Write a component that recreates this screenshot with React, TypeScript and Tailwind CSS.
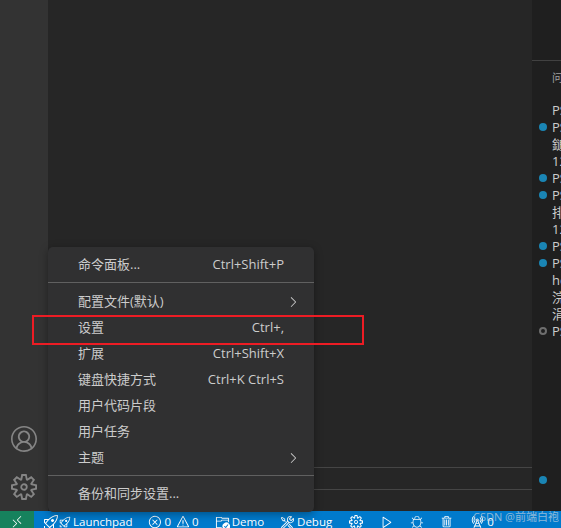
import { VscAccount, VscSettingsGear, VscRemote, VscRocket, VscError, VscWarning, VscFolderActive, VscTools, VscPlay, VscBug, VscTrash, VscRadioTower, VscChevronRight } from "react-icons/vsc";

function Item({ label, keys, sub }: { label: string; keys?: string; sub?: boolean }) {
  return (
    <div className="relative flex h-[26px] items-center justify-between px-[30px]">
      <span>{label}</span>
      {keys && <span>{keys}</span>}
      {sub && <VscChevronRight className="absolute right-[13px] top-[5px] text-[16px]" />}
    </div>
  );
}

const rows: { t: string; mark?: "dot" | "ring" }[] = [
  { t: "PS C:\\Users" },
  { t: "PS C:\\Users", mark: "dot" },
  { t: "鎚 npm run" },
  { t: "123 packages" },
  { t: "PS C:\\Users", mark: "dot" },
  { t: "PS C:\\Users", mark: "dot" },
  { t: "排 npm run" },
  { t: "123 packages" },
  { t: "PS C:\\Users", mark: "dot" },
  { t: "PS C:\\Users", mark: "dot" },
  { t: "hello world" },
  { t: "浣犲ソ" },
  { t: "涓栫晫" },
  { t: "PS C:\\Users", mark: "ring" },
];

export default function App() {
  return (
    <div className="relative h-[528px] w-[561px] overflow-hidden bg-[#252525] font-['Open_Sans','Noto_Sans_CJK_SC',sans-serif] text-[13px] text-[#cccccc]">
      <div className="flex h-[511px]">
        <aside className="flex w-[48px] shrink-0 flex-col items-center justify-end bg-[#333333] pb-[11px] text-[#858585]">
          <VscAccount className="mb-[22px] text-[26px]" />
          <VscSettingsGear className="text-[26px]" />
        </aside>
        <main className="flex flex-1 flex-col">
          <div className="flex-1 bg-[#262626]" />
          <div className="h-[22px] border-t border-[#454545] bg-[#262626]" />
          <div className="h-[22px] border-t border-[#454545] bg-[#262626]" />
        </main>
        <section className="w-[29px] shrink-0 overflow-hidden whitespace-nowrap bg-[#1f1f1f]">
          <div className="h-[61px] border-b border-[#414141]" />
          <div className="flex h-[35px] items-center pl-[20px] text-[11px] text-[#a0a0a0]">问题</div>
          <div className="pt-[6px]">
            {rows.map((r, i) => (
              <div key={i} className="flex h-[17px] items-center">
                <div className="mb-[2px] flex w-[20px] shrink-0 justify-end pr-[5px]">
                  {r.mark === "dot" && <span className="h-[8px] w-[8px] rounded-full bg-[#1a85b4]" />}
                  {r.mark === "ring" && <span className="h-[8px] w-[8px] rounded-full border-2 border-[#6e6e6e]" />}
                </div>
                <span>{r.t}</span>
              </div>
            ))}
          </div>
          <div className="mt-[135px] flex h-[17px] w-[20px] justify-end pr-[5px] pt-[1px]">
            <span className="h-[8px] w-[8px] rounded-full bg-[#1a85b4]" />
          </div>
        </section>
      </div>

      <footer className="flex h-[22px] items-center bg-[#007acc] text-[11.5px] text-white">
        <div className="flex h-full w-[34px] items-center justify-center bg-[#16825d]">
          <VscRemote className="text-[14px]" />
        </div>
        <div className="ml-[9px] flex items-center">
          <VscRocket className="text-[16px]" />
          <VscRocket className="text-[12px]" />
          <span className="ml-[2px]">Launchpad</span>
        </div>
        <div className="ml-[15px] flex items-center">
          <VscError className="text-[14px]" />
          <span className="ml-[3px]">0</span>
          <VscWarning className="ml-[5px] text-[14px]" />
          <span className="ml-[2px]">0</span>
        </div>
        <div className="ml-[16px] flex items-center gap-[2px]">
          <VscFolderActive className="text-[15px]" />
          <span>Demo</span>
        </div>
        <div className="ml-[16px] flex items-center gap-[2px]">
          <VscTools className="text-[15px]" />
          <span>Debug</span>
        </div>
        <VscSettingsGear className="ml-[17px] text-[14px]" />
        <VscPlay className="ml-[17px] text-[14px]" />
        <VscBug className="ml-[16px] text-[14px]" />
        <VscTrash className="ml-[16px] text-[14px]" />
        <VscRadioTower className="ml-[16px] text-[14px]" />
        <span className="ml-[3px]">0</span>
      </footer>

      <div className="absolute left-[48px] top-[247px] w-[266px] rounded-[5px] bg-[#303031] py-[5px] shadow-[0_2px_8px_rgba(0,0,0,0.36)]">
        <Item label="命令面板..." keys="Ctrl+Shift+P" />
        <div className="mb-[6px] mt-[4px] h-px bg-[#606060]" />
        <Item label="配置文件(默认)" sub />
        <Item label="设置" keys="Ctrl+," />
        <Item label="扩展" keys="Ctrl+Shift+X" />
        <Item label="键盘快捷方式" keys="Ctrl+K Ctrl+S" />
        <Item label="用户代码片段" />
        <Item label="用户任务" />
        <Item label="主题" sub />
        <div className="mb-[5px] mt-[4px] h-px bg-[#606060]" />
        <Item label="备份和同步设置..." />
      </div>

      <div className="absolute left-[32px] top-[315px] h-[30px] w-[332px] border-2 border-[#ed1c24]" />
      <div className="absolute left-[473px] top-[509px] text-[11px] text-[#c6d4e0] opacity-70">CSDN @前端白袍</div>
    </div>
  );
}
